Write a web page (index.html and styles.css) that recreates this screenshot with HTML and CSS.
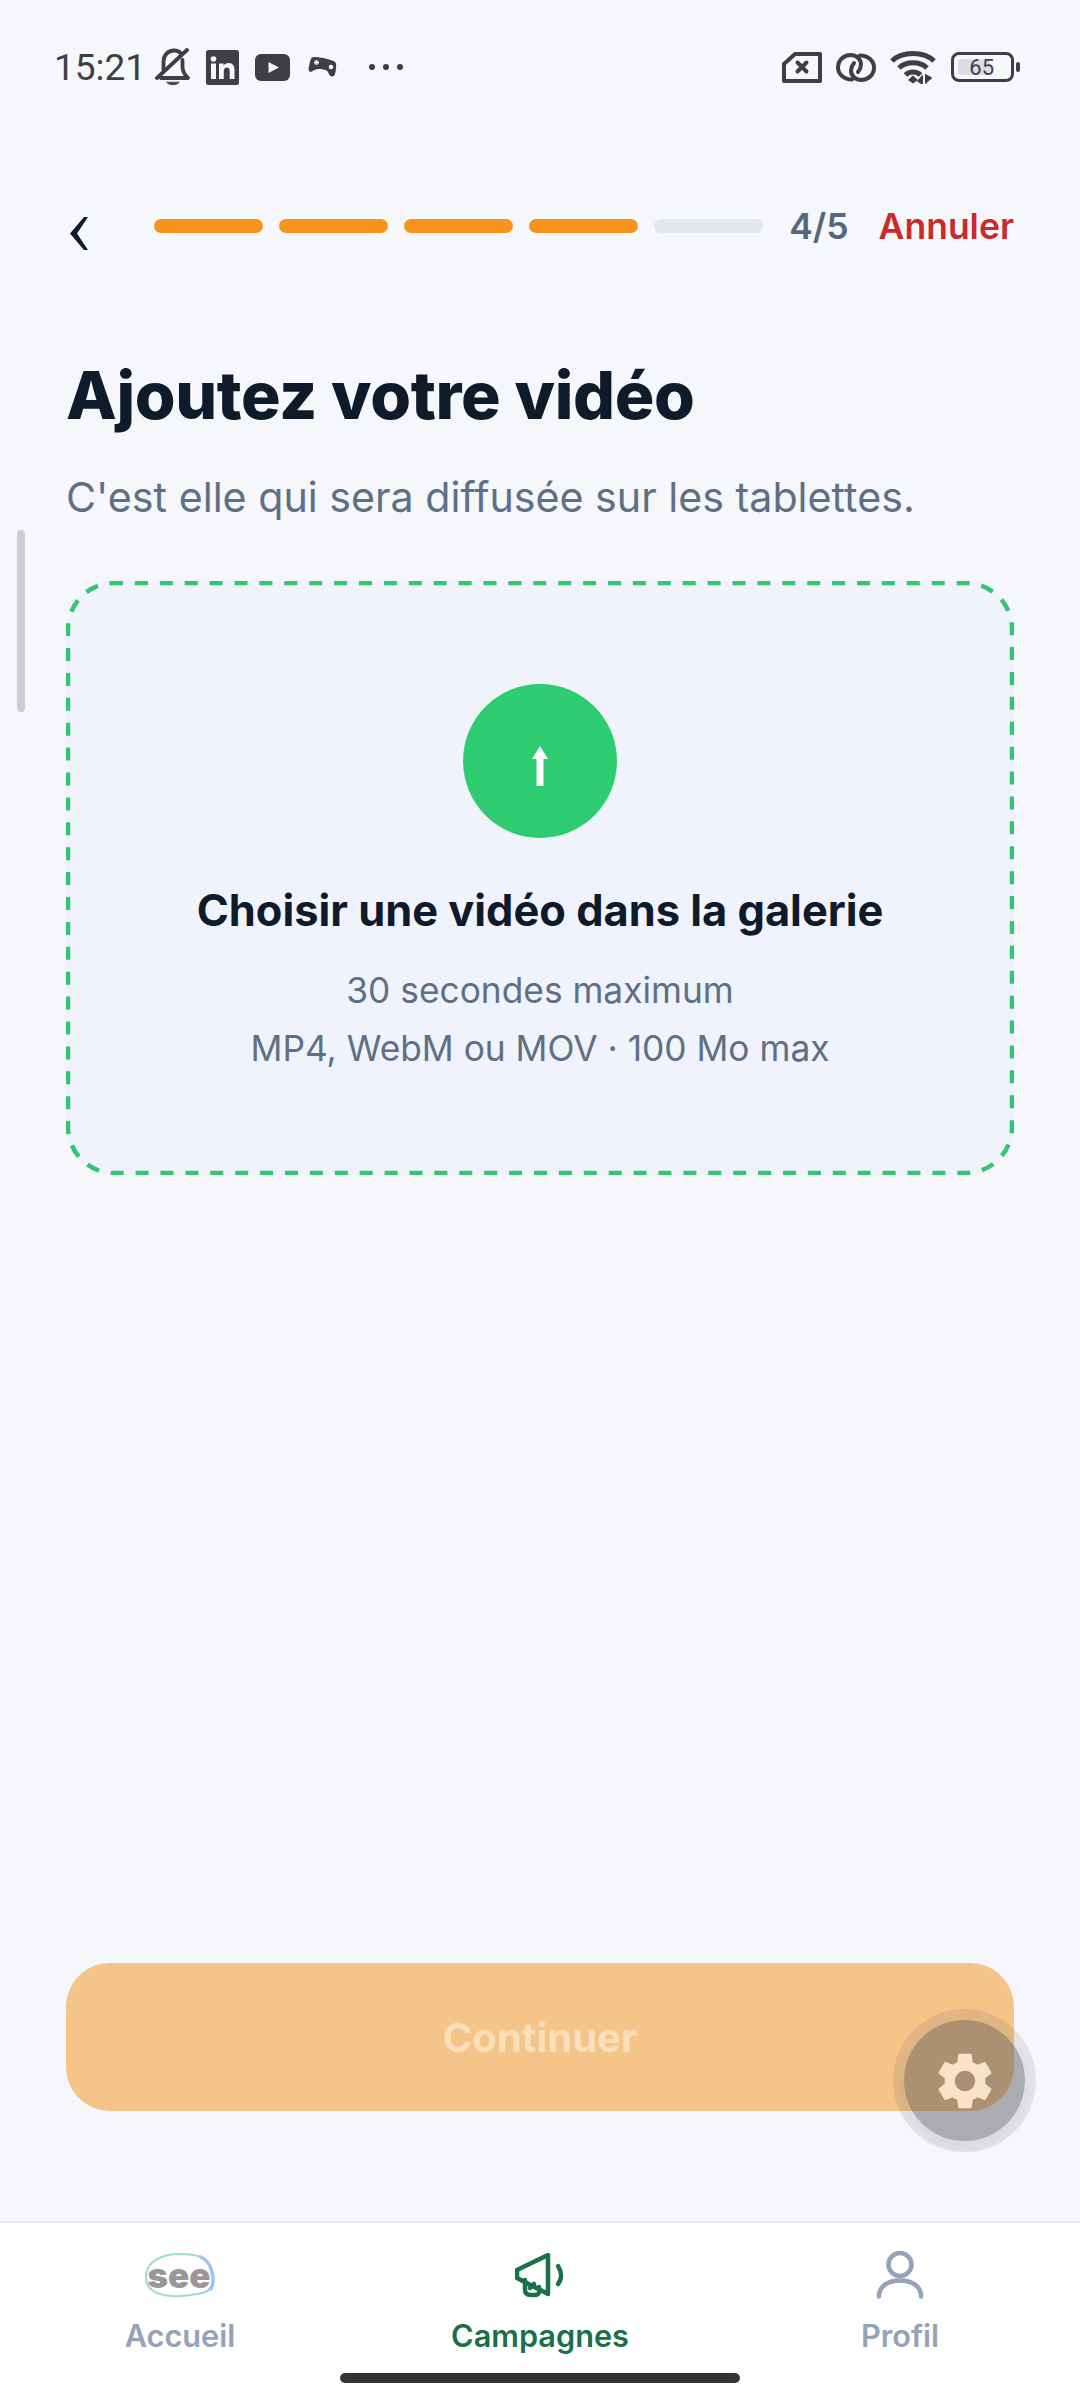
FILE: index.html
```html
<!DOCTYPE html>
<html lang="fr">
<head>
  <meta charset="UTF-8" />
  <meta name="viewport" content="width=device-width, initial-scale=1.0"/>
  <title>Ajoutez votre vidéo</title>
  <link rel="stylesheet" href="styles.css">
</head>
<body>
<div class="screen">

  <!-- Status bar -->
  <div class="status">
    <div class="status-left">
      <span class="time">15:21</span>
      <svg class="ic-bell" viewBox="0 0 35 38" fill="none" stroke="#3d3f44" stroke-width="3.800" stroke-linecap="round" stroke-linejoin="round">
        <path d="M8.500 22V14C8.500 7 13 2.500 19 2.500C22 2.500 24.500 3.500 26 5.500"/>
        <path d="M27.500 12V19C27.500 24 30 27 33 30H6"/>
        <path d="M2 30L32 2"/>
        <path d="M12 34.500C15 37.500 21 37.500 24 34.500Z" fill="#3d3f44" stroke-width="1"/>
      </svg>
      <svg class="ic-in" viewBox="0 0 33 35">
        <rect width="33" height="35" rx="2.500" fill="#3d3f44"/>
        <circle cx="7.500" cy="9" r="2.800" fill="#f5f7fb"/>
        <rect x="5" y="13.500" width="5" height="15.500" fill="#f5f7fb"/>
        <path d="M13 13.500H17.500V15.500C18.500 14 20.500 13 22.500 13C27 13 28.500 16 28.500 20V29H23.700V21C23.700 19 23 17.500 21 17.500C19 17.500 17.800 19 17.800 21V29H13Z" fill="#f5f7fb"/>
      </svg>
      <svg class="ic-yt" viewBox="0 0 35 27">
        <rect width="35" height="27" rx="6" fill="#3d3f44"/>
        <path d="M13.500 8L24 13.500L13.500 19Z" fill="#f5f7fb"/>
      </svg>
      <svg class="ic-game" viewBox="0 0 29 21">
        <path d="M5.500 1C11 1 19 2.500 25.500 5C28 6 28.500 8 28 12C27.500 17 27 20.500 24 20.500C21 20.500 20.500 15.500 18.500 14.500C15 13 10 12.500 6.500 14C4.500 15 3 16.500 1.500 15.500C0 14.500 0.500 12 1.500 8C2.500 4 3 1 5.500 1Z" fill="#3d3f44"/>
        <path d="M6 6.500H11M8.500 4V9" stroke="#f5f7fb" stroke-width="1.800"/>
        <circle cx="23" cy="11" r="2.300" fill="#f5f7fb"/>
      </svg>
      <div class="dots"><i></i><i></i><i></i></div>
    </div>
    <div class="status-right">
      <svg class="ic-sim" viewBox="0 0 40 31" fill="none" stroke="#3d3f44" stroke-width="4" stroke-linejoin="round" stroke-linecap="round">
        <path d="M13 2H38V29H2V12Z"/>
        <path d="M15.500 10.500L24.500 19.500M24.500 10.500L15.500 19.500"/>
      </svg>
      <svg class="ic-link" viewBox="0 0 40 29" fill="none" stroke="#3d3f44" stroke-width="4" stroke-linecap="round">
        <path d="M16 26.500C8 26.500 2 21 2 14.500C2 7 8 2 14.500 2C20.500 2 25 6 25 11.500C25 14 24 16.500 22 19"/>
        <path d="M24 2.500C32 2.500 38 8 38 14.500C38 22 32 27 25.500 27C19.500 27 15 23 15 17.500C15 15 16 12.500 18 10"/>
      </svg>
      <svg class="ic-wifi" viewBox="0 0 46 34">
        <g fill="none" stroke="#3d3f44" stroke-width="5">
          <path d="M2 11C12 1 34 1 44 11"/>
          <path d="M9 18C16 11 30 11 37 18"/>
          <path d="M15.500 25C19.500 21 26.500 21 30.500 25"/>
        </g>
        <path d="M23 25.500L28 30L23 33.500L18 30Z" fill="#3d3f44"/>
        <path d="M32 25.500V33.500L27.500 30.500M36 33.500V25.500L41.500 28.500" fill="#3d3f44" stroke="#3d3f44" stroke-width="2"/>
      </svg>
      <div class="battery">
        <div class="battery-body">
          <div class="battery-fill"></div>
          <span class="battery-num">65</span>
        </div>
        <div class="battery-nub"></div>
      </div>
    </div>
  </div>

  <div class="scroll-thumb"></div>

  <!-- Wizard header -->
  <div class="wizard-head">
    <div class="back">
      <svg viewBox="0 0 18 33"><path d="M18 0H14L0 16.500L14 33H18L7 16.500Z" fill="#0f1a2a"/></svg>
    </div>
    <div class="steps">
      <div class="step done"></div>
      <div class="step done"></div>
      <div class="step done"></div>
      <div class="step done"></div>
      <div class="step"></div>
    </div>
    <span class="step-count">4/5</span>
    <span class="cancel">Annuler</span>
  </div>

  <div class="content">
    <h1>Ajoutez votre vidéo</h1>
    <p class="lead">C'est elle qui sera diffusée sur les tablettes.</p>

    <div class="dropzone">
      <svg class="dash" viewBox="0 0 948 594" fill="none">
        <rect x="2" y="2" width="944" height="590" rx="46" stroke="#35c474" stroke-width="4.500" stroke-dasharray="13 11.900" stroke-dashoffset="4"/>
      </svg>
      <div class="upload-circle">
        <svg viewBox="0 0 16 40"><path d="M8 0L16 13H11.500V40H4.500V13H0Z" fill="#fff"/></svg>
      </div>
      <div class="drop-title">Choisir une vidéo dans la galerie</div>
      <div class="drop-info">30 secondes maximum</div>
      <div class="drop-info">MP4, WebM ou MOV · 100 Mo max</div>
    </div>

    <div class="continue">Continuer</div>
  </div>

  <!-- Debug button floating over the page -->
  <div class="fab-clip">
    <div class="fab">
      <svg viewBox="0 0 24 24"><path fill="#fbe3c6" d="M19.140 12.940c.04-.3.06-.61.06-.94 0-.32-.02-.64-.07-.94l2.030-1.580c.18-.14.23-.41.12-.61l-1.920-3.320c-.12-.22-.37-.29-.59-.22l-2.390.96c-.5-.38-1.030-.7-1.620-.94l-.36-2.540c-.04-.24-.24-.41-.48-.41h-3.840c-.24 0-.43.17-.47.41l-.36 2.540c-.59.24-1.130.57-1.620.94l-2.390-.96c-.22-.08-.47 0-.59.22L2.740 8.870c-.12.21-.08.47.12.61l2.030 1.580c-.05.3-.09.63-.09.94s.02.64.07.94l-2.030 1.580c-.18.14-.23.41-.12.61l1.920 3.320c.12.22.37.29.59.22l2.390-.96c.5.38 1.030.7 1.620.94l.36 2.540c.05.24.24.41.48.41h3.840c.24 0 .44-.17.47-.41l.36-2.540c.59-.24 1.130-.56 1.620-.94l2.390.96c.22.08.47 0 .59-.22l1.920-3.320c.12-.22.07-.47-.12-.61l-2.010-1.580zM12 15.600c-1.980 0-3.600-1.620-3.600-3.600s1.620-3.600 3.600-3.600 3.600 1.620 3.600 3.600-1.620 3.600-3.600 3.600z"/></svg>
    </div>
  </div>

  <!-- Tab bar -->
  <div class="tabs">
    <div class="tab">
      <svg class="tab-icon" viewBox="0 0 70 46">
        <defs>
          <linearGradient id="blob" x1="0" y1="0" x2="1" y2="0">
            <stop offset="0" stop-color="#9adccd"/>
            <stop offset="0.600" stop-color="#9fdbd6"/>
            <stop offset="1" stop-color="#9cc6f0"/>
          </linearGradient>
        </defs>
        <path d="M1 24C1 9 16 1 34 1C50 1 63 2 67 19C70 31 66 40 52 41C44 42 34 44 26 43C12 42 1 37 1 24Z" fill="none" stroke="url(#blob)" stroke-width="2"/>
        <path d="M56 4C62 7 66 13 67.500 21C68.500 27 68 32 66 36" fill="none" stroke="#9cc6f0" stroke-width="3.500" stroke-linecap="round"/>
        <text x="34" y="35" text-anchor="middle" class="logo-text">see</text>
      </svg>
      <span>Accueil</span>
    </div>
    <div class="tab active">
      <svg class="tab-icon" viewBox="0 0 50 46" fill="none" stroke="#1a7048" stroke-width="4.500" stroke-linecap="round" stroke-linejoin="round">
        <path d="M2 17L33 2V41L2 25Z"/>
        <path d="M10 27V37C10 41 13 42 16 42H20C24 42 25 39 24 34"/>
        <path d="M15 35L19 31"/>
        <path d="M43 13C47 19 47 26 43 31"/>
      </svg>
      <span>Campagnes</span>
    </div>
    <div class="tab">
      <svg class="tab-icon profile-icon" viewBox="0 0 50 50" fill="none" stroke="#94a3b8" stroke-width="4.500" stroke-linecap="round">
        <circle cx="25" cy="13.500" r="11.500"/>
        <path d="M4 45.500C4 35 13 29.500 25 29.500C37 29.500 46 35 46 45.500"/>
      </svg>
      <span>Profil</span>
    </div>
    <div class="home-bar"></div>
  </div>

</div>
</body>
</html>
```

FILE: styles.css
```css
* {
  box-sizing: border-box;
  margin: 0;
  padding: 0;
}
body {
  font-family: Inter, "Noto Sans", sans-serif;
  background: #f5f7fb;
  color: #0f1a2a;
}
.screen {
  position: relative;
  width: 1080px;
  height: 2400px;
  display: flex;
  flex-direction: column;
  overflow: hidden;
}

/* status bar */
.status {
  height: 134px;
  padding: 0 60px 0 54px;
  display: flex;
  justify-content: space-between;
  align-items: center;
  flex-shrink: 0;
}
.status-left, .status-right {
  display: flex;
  align-items: center;
}
.status-left { gap: 16px; }
.status-right { gap: 14px; }
.time {
  font-family: Roboto, sans-serif;
  font-size: 37px;
  color: #3d3f44;
  width: 85px;
}
.status svg { display: block; flex-shrink: 0; }
.ic-bell { width: 35px; height: 38px; }
.ic-in { width: 33px; height: 35px; }
.ic-yt { width: 35px; height: 27px; }
.ic-game { width: 29px; height: 21px; margin-left: 2px; margin-top: -2px; }
.dots {
  display: flex;
  gap: 8px;
  margin-left: 16px;
}
.dots i {
  width: 6px;
  height: 6px;
  border-radius: 50%;
  background: #3d3f44;
}
.ic-sim { width: 40px; height: 31px; }
.ic-link { width: 40px; height: 29px; }
.ic-wifi { width: 46px; height: 34px; }
.battery {
  display: flex;
  align-items: center;
  gap: 2px;
  margin-left: 1px;
}
.battery-body {
  position: relative;
  width: 63px;
  height: 30px;
  border: 3px solid #3d3f44;
  border-radius: 8px;
  display: flex;
  align-items: center;
  justify-content: flex-end;
  padding-right: 17px;
}
.battery-fill {
  position: absolute;
  left: 4px;
  top: 4px;
  bottom: 4px;
  width: 32px;
  background: #dcdde1;
  border-radius: 3px;
}
.battery-num {
  position: relative;
  font-family: Roboto, sans-serif;
  font-size: 22px;
  color: #3d3f44;
}
.battery-nub {
  width: 4px;
  height: 10px;
  background: #3d3f44;
  border-radius: 2px;
}

.scroll-thumb {
  position: absolute;
  left: 17px;
  top: 530px;
  width: 8px;
  height: 182px;
  background: #cdced2;
  border-radius: 4px;
}

/* wizard header */
.wizard-head {
  margin-top: 59px;
  height: 66px;
  padding: 0 66px;
  display: flex;
  align-items: center;
  flex-shrink: 0;
}
.back {
  width: 88px;
  flex-shrink: 0;
  padding: 14px 0 0 4px;
}
.back svg {
  display: block;
  width: 18px;
  height: 33px;
}
.steps {
  flex: 1;
  display: flex;
  gap: 16px;
}
.step {
  flex: 1;
  height: 14px;
  border-radius: 7px;
  background: #e3e8f0;
}
.step.done { background: #f7941e; }
.step-count {
  margin-left: 26px;
  font-size: 35.5px;
  font-weight: 600;
  color: #56667c;
}
.cancel {
  margin-left: 30px;
  font-size: 35.5px;
  font-weight: 600;
  color: #cb2a2d;
}

/* content */
.content {
  flex: 1;
  padding: 96px 66px 110px;
  display: flex;
  flex-direction: column;
}
h1 {
  font-size: 66px;
  line-height: 80px;
  font-weight: 800;
  letter-spacing: -0.35px;
}
.lead {
  margin-top: 34px;
  font-size: 41.2px;
  line-height: 56px;
  color: #5f6f84;
}
.dropzone {
  position: relative;
  margin-top: 56px;
  height: 594px;
  padding-top: 103px;
  background: #f0f3fb;
  border-radius: 48px;
  display: flex;
  flex-direction: column;
  align-items: center;
}
.dash {
  position: absolute;
  top: 0;
  left: 0;
  width: 100%;
  height: 100%;
}
.upload-circle {
  width: 154px;
  height: 154px;
  border-radius: 50%;
  background: #2ecc71;
  display: flex;
  align-items: center;
  justify-content: center;
}
.upload-circle svg {
  width: 16px;
  height: 40px;
  margin-top: 9px;
}
.drop-title {
  margin-top: 44px;
  margin-bottom: 24px;
  font-size: 43.4px;
  line-height: 56px;
  font-weight: 700;
}
.drop-info {
  font-size: 35.3px;
  line-height: 58px;
  color: #5f6f84;
}
.continue {
  margin-top: auto;
  height: 148px;
  border-radius: 44px;
  background: #f5c488;
  color: #fbdfbb;
  font-size: 40px;
  font-weight: 700;
  display: flex;
  align-items: center;
  justify-content: center;
}

/* floating button */
.fab-clip {
  position: absolute;
  left: 893px;
  top: 2009px;
  width: 144px;
  height: 143px;
  padding: 11px;
  overflow: hidden;
}
.fab {
  width: 121px;
  height: 121px;
  border-radius: 50%;
  background: rgba(82, 82, 88, 0.46);
  box-shadow: 0 0 0 11px rgba(82, 82, 88, 0.12), 0 8px 16px rgba(0, 0, 0, 0.04);
  display: flex;
  align-items: center;
  justify-content: center;
}
.fab svg {
  width: 68px;
  height: 68px;
}

/* tab bar */
.tabs {
  position: relative;
  height: 179px;
  flex-shrink: 0;
  background: #fff;
  border-top: 2px solid #e6e8ec;
  display: flex;
  padding-top: 30px;
}
.tab {
  flex: 1;
  display: flex;
  flex-direction: column;
  align-items: center;
  font-size: 30.7px;
  line-height: 40px;
  font-weight: 600;
  color: #94a3b8;
}
.tab.active { color: #1a7048; }
.tab-icon {
  display: block;
  height: 46px;
  margin-bottom: 17px;
}
.profile-icon {
  height: 50px;
  margin-top: -2px;
  margin-bottom: 15px;
}
.logo-text {
  font-family: Inter, sans-serif;
  font-size: 35px;
  font-weight: 900;
  fill: #9a979b;
}
.home-bar {
  position: absolute;
  left: 340px;
  bottom: 17px;
  width: 400px;
  height: 10px;
  border-radius: 5px;
  background: #333;
}
```
